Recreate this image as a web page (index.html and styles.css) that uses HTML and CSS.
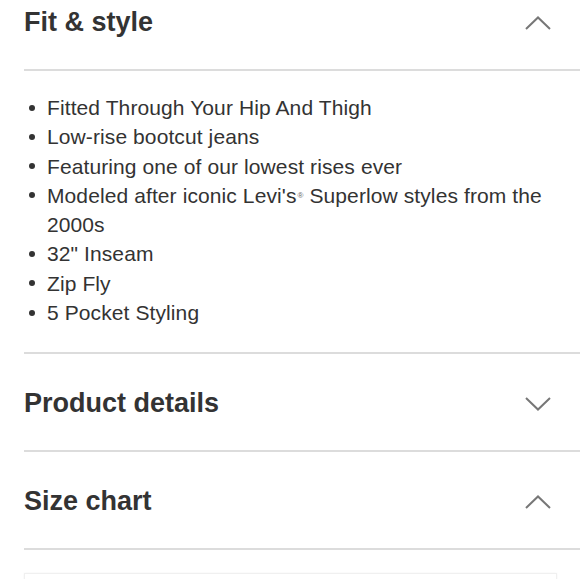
FILE: index.html
```html
<!DOCTYPE html>
<html lang="en">
<head>
<meta charset="utf-8">
<title>Product accordion</title>
<link rel="stylesheet" href="styles.css">
</head>
<body>
<div class="page">
  <section class="acc">
    <div class="acc-head acc-head-open">
      <h2 class="acc-title">Fit &amp; style</h2>
      <svg class="chev" viewBox="0 0 26 14" width="26" height="14"><path d="M1 13 L13 1.5 L25 13"/></svg>
    </div>
    <ul class="acc-list">
      <li>Fitted Through Your Hip And Thigh</li>
      <li>Low-rise bootcut jeans</li>
      <li>Featuring one of our lowest rises ever</li>
      <li>Modeled after iconic Levi's<span class="reg">®</span> Superlow styles from the 2000s</li>
      <li>32" Inseam</li>
      <li>Zip Fly</li>
      <li>5 Pocket Styling</li>
    </ul>
  </section>
  <section class="acc">
    <div class="acc-head">
      <h2 class="acc-title">Product details</h2>
      <svg class="chev" viewBox="0 0 26 14" width="26" height="14"><path d="M1 1 L13 12.5 L25 1"/></svg>
    </div>
  </section>
  <section class="acc">
    <div class="acc-head">
      <h2 class="acc-title">Size chart</h2>
      <svg class="chev" viewBox="0 0 26 14" width="26" height="14"><path d="M1 13 L13 1.5 L25 13"/></svg>
    </div>
  </section>
  <div class="chart-box"></div>
</div>
</body>
</html>
```
FILE: styles.css
```css
html, body {
  margin: 0;
  padding: 0;
  background: #fff;
}
body {
  font-family: "Liberation Sans", Arial, Helvetica, sans-serif;
  color: #333;
  overflow: hidden;
}
.page {
  margin-top: -27px;
  padding-left: 24px;
}
.acc {
  border-bottom: 2px solid #dcdcdc;
}
.acc-head {
  box-sizing: border-box;
  height: 96px;
  padding-top: 3px;
  display: flex;
  align-items: center;
  justify-content: space-between;
  padding-right: 29px;
}
.acc-head-open {
  height: 98px;
  border-bottom: 2px solid #dcdcdc;
}
.acc-title {
  margin: 0;
  font-size: 27px;
  font-weight: bold;
  color: #333;
}
.chev {
  display: block;
  fill: none;
  stroke: #777;
  stroke-width: 2;
}
.acc-list {
  list-style: none;
  margin: 0;
  padding: 22px 24px 25px 23px;
  font-size: 21px;
  line-height: 29.3px;
  letter-spacing: 0.1px;
  color: #333;
}
.acc-list li {
  position: relative;
}
.acc-list li::before {
  content: "";
  position: absolute;
  left: -18px;
  top: 11.5px;
  width: 6px;
  height: 6px;
  border-radius: 50%;
  background: #333;
}
.reg {
  display: inline-block;
  font-size: 8px;
  line-height: 8px;
  vertical-align: 5px;
  margin-left: 1px;
  color: #666;
}
.chart-box {
  margin-top: 23px;
  margin-right: 23px;
  height: 40px;
  border: 1px solid #f0f0f0;
  box-shadow: 0 0 2px rgba(0,0,0,0.05);
}
```
